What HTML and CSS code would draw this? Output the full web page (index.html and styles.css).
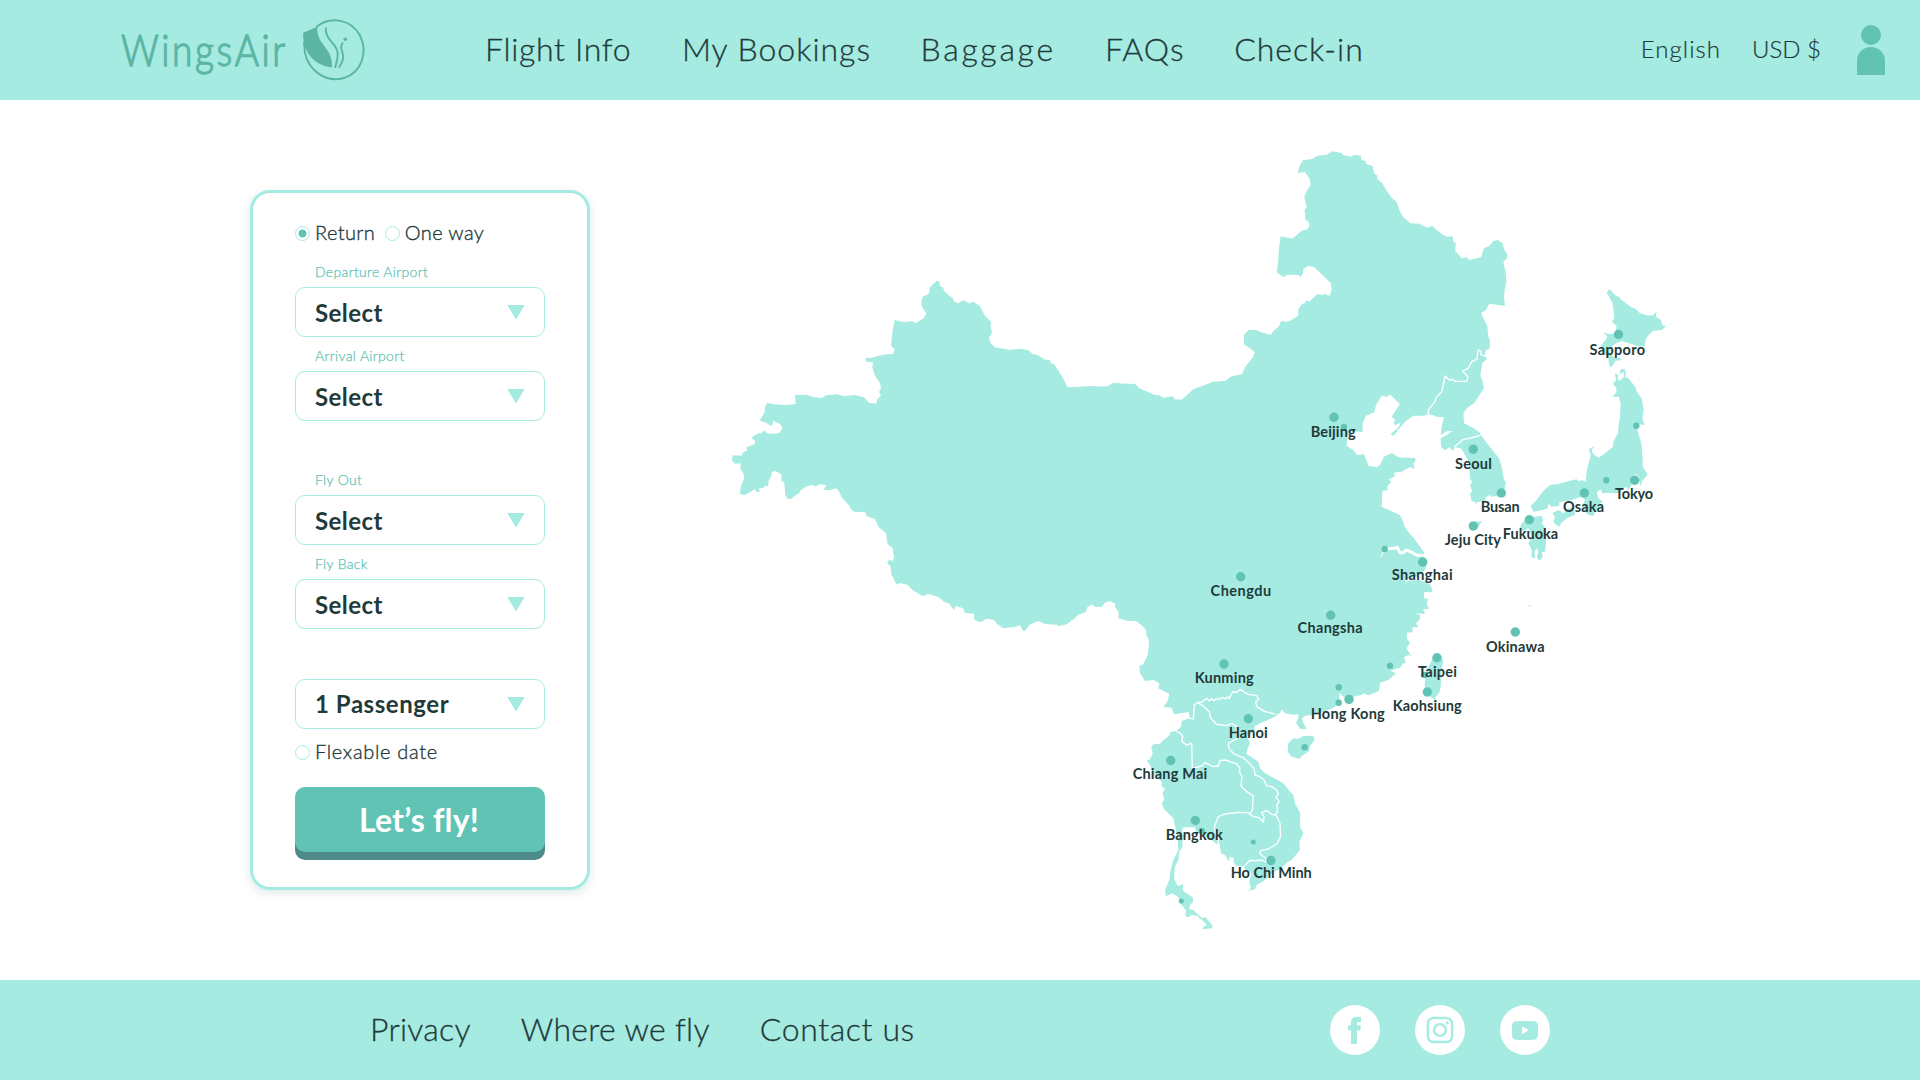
FILE: index.html
```html
<!DOCTYPE html>
<html lang="en">
<head>
<meta charset="utf-8">
<title>WingsAir</title>
<link rel="stylesheet" href="styles.css">
</head>
<body>
<header class="header">
  <a class="logo">
    <svg width="250" height="100" viewBox="120 0 250 100">
      <text class="wordmark" x="121" y="65.500" textLength="167" lengthAdjust="spacingAndGlyphs">WingsAir</text>
      <g fill="none" stroke="#5cb5a3" stroke-width="1.9" stroke-linecap="round">
        <path d="M317 26.500C331 16 351 19 360 35.500C369 54 360 73 344 78C326 83 309 71 305 53L304 43"/>
        <path d="M325.800 28.300C325 42 340 43 337.500 58Q336.500 63 335.200 67"/>
        <path d="M342.600 43.300C338 49 345 52 343 59Q342 63 339.200 67"/>
      </g>
      <path fill="#5cb5a3" d="M303.200 32.700L317.400 26.700C316 45 333 47 332 67.300C315 66 302 52 303.200 32.700Z"/>
      <circle cx="345.300" cy="39.300" r="1.800" fill="#5cb5a3"/>
    </svg>
  </a>
  <nav class="nav">
    <a class="n1">Flight Info</a><a class="n2">My Bookings</a><a class="n3">Baggage</a><a class="n4">FAQs</a><a class="n5">Check-in</a>
  </nav>
  <div class="account">
    <span class="lang">English</span><span class="cur">USD $</span>
    <svg width="28" height="50" viewBox="0 0 28 50" fill="#60c3b4"><circle cx="14" cy="10" r="10"/><path d="M0 50V36a14 14 0 0 1 28 0V50Z"/></svg>
  </div>
</header>

<main class="main">
  <form class="card">
    <div class="radios">
      <span class="radio on"></span><span class="r1">Return</span>
      <span class="radio second"></span><span class="r2">One way</span>
    </div>
    <div class="field"><label>Departure Airport</label><div class="select"><span>Select</span><i></i></div></div>
    <div class="field"><label>Arrival Airport</label><div class="select"><span>Select</span><i></i></div></div>
    <div class="field gap"><label>Fly Out</label><div class="select"><span>Select</span><i></i></div></div>
    <div class="field"><label>Fly Back</label><div class="select"><span>Select</span><i></i></div></div>
    <div class="select passengers"><span>1 Passenger</span><i></i></div>
    <div class="radios flex"><span class="radio"></span><span class="r3">Flexable date</span></div>
    <div class="submit">Let’s fly!</div>
  </form>

  <svg class="map" viewBox="720 140 960 800">
    <g class="land">
      <!-- western China -->
      <path transform="translate(720 270) scale(.33333)" d="M1200 340L1180 340 1163 349 1110 350 1042 351 1028 322 1010 295 1003 283 993 280 990 270 975 269 952 255 938 252 925 241 900 236 870 240 825 232 812 220 807 203 816 188 812 172 813 155 795 138 780 108 760 95 747 100 730 90 715 100 703 95 698 85 675 66 668 52 660 48 658 34 650 32 628 53 629 65 624 73 608 80 604 95 606 110 619 130 612 143 590 158 582 158 579 153 560 156 545 155 524 150 518 180 513 228 524 236 519 252 500 253 470 259 455 264 440 263 435 270 440 275 459 277 457 292 465 317 480 340 483 355 477 367 483 375 471 390 469 401 447 398 432 382 405 375 385 377 370 378 350 373 318 376 305 384 285 382 258 374 225 375 227 402 200 405 160 403 142 398 135 410 133 428 119 452 140 459 150 467 157 465 160 452 180 462 188 475 177 490 143 491 133 481 125 490 112 491 94 503 106 513 104 523 80 532 81 541 68 548 65 557 38 556 35 570 44 581 62 580 61 597 68 605 73 623 62 650 60 672 75 675 90 667 103 658 110 665 119 666 117 655 128 654 135 647 144 648 146 632 153 620 156 605 167 603 185 614 184 632 193 637 196 675 203 687 215 686 222 679 238 670 242 661 258 650 278 644 283 650 300 643 318 645 312 660 328 661 347 655 355 661 365 682 388 707 392 717 402 725 435 726 440 738 465 748 475 770 498 790 502 818 508 829 517 832 523 865 516 873 508 869 501 878 512 890 514 912 525 936 532 944 540 939 562 944 580 962 608 978 625 972 655 981 672 995 688 1001 702 1020 707 1008 728 1014 735 1029 762 1031 763 1050 782 1057 800 1046 822 1050 832 1063 850 1075 882 1071 900 1066 910 1084 918 1080 928 1064 955 1053 975 1062 1010 1064 1015 1069 1040 1063 1065 1044 1075 1034 1098 1026 1102 1012 1117 1002 1125 1010 1145 1010 1155 997 1170 993 1185 1000 1186 1012 1196 1025 1196 1045 1210 1045 1210 360Z"/>
      <!-- north-eastern China -->
      <path transform="translate(1080 130) scale(.33333)" d="M0 770L35 768 60 771 82 770 98 760 165 762 178 775 225 795 238 796 250 803 279 799 283 808 305 809 340 778 400 755 437 752 455 739 485 733 497 709 520 680 525 666 492 643 492 615 505 600 528 599 542 606 572 615 577 606 597 589 604 573 625 575 654 558 656 535 667 521 675 520 679 511 687 515 713 492 727 495 735 492 749 497 755 480 753 460 703 412 686 408 670 417 669 430 662 441 655 435 622 434 610 441 590 427 594 400 597 355 602 319 637 326 665 302 683 298 689 285 684 274 676 270 674 240 680 232 676 215 673 200 680 183 692 165 688 145 674 125 654 130 657 112 668 91 697 87 712 77 740 74 757 64 785 69 790 76 815 80 822 74 842 77 845 90 857 93 859 102 878 108 882 130 892 137 892 148 907 160 920 182 935 203 950 216 958 240 970 262 992 280 1018 281 1042 293 1057 287 1070 300 1090 315 1103 321 1118 318 1119 333 1127 340 1126 363 1145 385 1160 382 1168 390 1203 382 1212 354 1228 348 1240 333 1252 330 1268 340 1272 358 1282 372 1281 384 1270 395 1277 425 1279 455 1274 480 1272 500 1275 528 1228 521 1218 539 1203 550 1222 588 1225 620 1230 632 1229 657 1218 660 1214 676 1180 740 1100 800 1045 855 1025 857 1000 857 975 875 960 893 940 918 932 912 955 893 962 878 945 885 940 880 946 870 935 860 960 822 945 808 930 793 922 800 905 797 888 825 883 847 857 858 848 880 848 905 820 905 803 915 800 948 820 960 832 975 852 973 866 1008 890 1012 900 1005 912 980 936 969 955 982 1005 984 1007 993 1000 1000 1005 1017 990 1011 965 1025 942 1028 945 1038 925 1050 928 1060 915 1080 880 1100 0 1100Z"/>
      <!-- southern China -->
      <path transform="translate(1080 540) scale(.33333)" d="M0 215L20 195 36 193 45 200 65 200 75 187 90 183 105 190 106 202 120 215 116 235 145 243 168 243 185 256 198 270 199 285 207 300 206 322 203 345 190 372 178 378 180 400 195 423 220 420 238 430 235 445 268 462 262 485 250 500 275 503 282 523 325 516 340 540 500 560 535 550 570 535 585 522 600 520 605 508 615 520 640 524 655 522 655 535 648 548 660 566 680 568 670 548 666 535 675 527 700 525 730 515 760 503 779 490 778 458 788 468 800 478 830 468 845 465 850 460 865 466 885 458 897 452 900 428 925 420 948 400 930 392 960 383 970 370 978 370 972 352 985 345 993 348 980 325 990 308 982 298 980 278 998 277 997 262 1015 262 1008 250 1018 240 1022 226 1005 220 1035 222 1030 208 1047 206 1040 190 1045 178 1032 174 1033 156 1058 157 1052 135 1020 120 980 122 978 132 976 118 1010 110 1035 90 1042 66 1030 48 1033 38 1002 -5 988 -20 973 -42 970 -55 960 -75 905 -100 907 -148 925 -150 920 -160 935 -176 880 -200 0 -200Z"/>
      <!-- Indochina -->
      <path transform="translate(1110 660) scale(.33333)" d="M250 60L238 160 238 175 215 183 213 200 198 213 180 217 178 227 158 242 150 252 130 253 124 262 128 280 120 298 110 302 122 318 128 340 155 365 155 380 165 385 158 400 163 420 155 430 162 447 190 475 196 500 203 540 205 570 190 600 182 630 178 660 165 690 168 708 188 700 205 712 212 732 228 750 226 768 236 772 245 764 262 768 282 785 290 795 278 802 278 808 305 805 308 797 285 770 278 775 265 765 250 750 238 748 240 735 250 725 248 712 225 697 218 690 220 672 203 678 192 655 195 620 205 600 208 575 218 560 217 545 222 530 215 515 220 502 255 502 258 515 275 515 285 530 300 535 320 553 328 550 333 580 345 585 355 604 360 590 372 595 370 605 378 617 400 617 408 632 425 640 418 665 423 685 415 693 435 688 440 675 465 660 490 635 510 628 530 608 545 600 570 570 568 545 580 520 570 500 571 460 555 430 550 405 540 395 520 370 465 340 450 325 445 305 415 285 409 282 413 265 420 250 412 230 435 210 433 200 450 190 495 170 515 150 500 60Z"/>
      <path transform="translate(1110 660) scale(.33333)" d="M535 250L550 235 565 236 580 228 610 227 614 240 600 258 598 272 575 288 570 296 545 290 533 275Z"/>
      <!-- Taiwan -->
      <path transform="translate(1080 540) scale(.33333)" d="M1060 350L1090 358 1084 395 1082 440 1078 458 1066 472 1065 485 1060 475 1035 462 1034 430 1040 390 1052 368Z"/>
      <g transform="translate(1320 330) scale(.33333)">
        <!-- Korea -->
        <path d="M475 58L488 62 494 76 501 87 487 100 481 137 487 150 492 175 480 193 462 220 442 233 430 250 432 280 460 294 480 308 487 320 505 345 537 385 545 410 550 440 552 450 557 455 555 475 540 500 524 498 514 500 510 495 497 502 496 512 470 517 468 525 465 516 455 512 450 490 457 485 450 465 457 455 450 448 449 430 447 400 440 385 430 365 422 355 405 352 398 362 388 352 375 361 363 350 362 325 380 315 398 302 380 304 362 316 365 290 372 262 350 260 340 256 330 255 325 245 375 140Z"/>
        <path d="M448 580L465 575 486 574 476 590 455 602Z"/>
        <!-- Honshu -->
        <path d="M885 130L888 150 879 162 890 175 888 188 877 200 896 200 902 220 900 260 895 290 894 310 880 335 879 350 855 370 835 383 818 370 815 360 824 347 806 358 812 375 800 425 797 455 784 450 778 455 770 448 750 452 715 462 690 465 670 482 655 503 645 515 632 528 640 545 670 540 683 535 685 522 695 530 718 528 718 517 755 510 785 500 795 510 785 530 790 540 805 555 820 558 825 545 845 530 838 522 848 515 835 505 830 487 842 478 847 490 870 488 885 490 898 488 905 480 918 470 925 480 935 465 935 440 947 432 956 440 962 470 965 455 983 433 968 410 968 390 965 345 955 310 950 290 960 283 974 286 967 265 971 240 965 205 950 185 947 172 925 145 912 140 900 152 893 148 895 135Z"/>
        <path d="M899 125L905 116 915 118 918 135 913 143 910 126 900 132Z"/>
        <!-- Shikoku, Kyushu -->
        <path d="M697 550L715 540 730 550 745 535 762 533 765 555 740 565 723 580 720 590 708 585 700 575 705 560Z"/>
        <path d="M612 573L640 560 665 558 670 570 665 580 676 595 678 640 675 665 665 667 668 680 660 692 650 684 655 665 650 655 643 665 646 685 635 682 635 660 625 640 635 620 625 595 610 605 600 597 602 585Z"/>
        <path d="M624 829L630 825 636 825 628 830Z"/>
      </g>
      <!-- Hokkaido -->
      <path transform="translate(1560 270) scale(.33333)" d="M148 57L165 75 177 80 185 90 212 110 228 118 240 130 265 137 280 136 290 124 287 140 303 150 307 165 318 168 306 180 280 182 268 193 257 208 254 228 235 230 215 222 185 213 165 222 152 232 150 252 165 264 185 265 182 271 167 272 155 292 148 288 145 265 125 240 122 228 137 210 142 200 130 187 148 193 165 190 170 168 156 155 163 145 158 100 150 85 140 68Z"/>
    </g>

    <g class="borders">
      <g transform="translate(1110 660) scale(.33333)">
        <path d="M230 165L240 175 250 177 253 135 262 127 275 127 290 115 297 122 305 116 312 122 318 116 330 118 337 112 345 117 352 110 357 116 368 96 380 97 392 88 405 98 415 103 440 107 446 118 437 125 440 140 465 155 495 162"/>
        <path d="M262 127L280 138 298 155 302 175 320 193 350 197 365 190 380 200 382 235 355 250 357 265 372 282 400 293 418 310 432 325 435 345 450 350 462 360 470 377 485 380 500 390 505 400 498 412 508 425 500 435 503 455 495 462"/>
        <path d="M198 213L212 220 218 230 216 245 230 255 245 250 247 325 275 318 285 308 310 320 325 318 330 302 345 300 380 312 390 325 388 335 396 350 393 378 410 395 430 408 427 450 420 462"/>
        <path d="M325 553L325 530 317 520 313 500 325 470 345 462 385 457 415 458 430 470 445 472 460 487 462 470 455 458 470 452 485 463 498 465 510 490 512 530 500 552 475 567 452 572 450 582 468 595 468 606 455 600 440 602 420 601 403 618"/>
      </g>
      <g transform="translate(1320 330) scale(.33333)">
        <path d="M325 262L325 240 345 215 347 205 365 185 371 160 375 138 388 150 398 148 405 154 440 154 444 140 427 123 445 115 455 95 470 88 475 60 483 64 482 74 498 79"/>
        <path d="M402 352L430 328 445 326 475 318 487 313"/>
        <path d="M192 657L222 655 232 652 240 668 250 668 258 660 278 668 290 676 315 676" stroke-width="9"/>
        <path d="M190 665L182 681" stroke-width="3"/>
      </g>
    </g>

    <g class="dots">
      <circle cx="1334" cy="417.300" r="4.700"/><circle cx="1473.300" cy="449.300" r="4.700"/><circle cx="1501.300" cy="493" r="4.700"/><circle cx="1473.300" cy="526" r="4.700"/><circle cx="1422.700" cy="562" r="4.700"/><circle cx="1330.700" cy="615.300" r="4.700"/><circle cx="1515.300" cy="632" r="4.700"/><circle cx="1437" cy="657.700" r="4.700"/><circle cx="1529.300" cy="519.700" r="4.700"/><circle cx="1584.300" cy="493" r="4.700"/><circle cx="1634.700" cy="480.300" r="4.700"/><circle cx="1618.500" cy="334.500" r="4.700"/><circle cx="1240.700" cy="576.700" r="4.700"/><circle cx="1224" cy="664" r="4.700"/><circle cx="1349" cy="699.500" r="4.700"/><circle cx="1248.300" cy="718.700" r="4.700"/><circle cx="1427.300" cy="692" r="4.700"/><circle cx="1170.700" cy="760.500" r="4.700"/><circle cx="1195.300" cy="820.500" r="4.700"/><circle cx="1271" cy="860.500" r="4.700"/>
      <circle cx="1344" cy="427" r="3.200"/><circle cx="1384.700" cy="549" r="3.200"/><circle cx="1390" cy="665.700" r="3.200"/><circle cx="1606.300" cy="480.300" r="3.200"/><circle cx="1636.300" cy="425.700" r="3.200"/><circle cx="1338.700" cy="687.300" r="3.200"/><circle cx="1338.700" cy="702.700" r="3.200"/><circle cx="1424.700" cy="675" r="3.200"/><circle cx="1304.700" cy="747.300" r="3.200"/><circle cx="1201.700" cy="831" r="3.200"/><circle cx="1253.300" cy="842" r="2.500"/><circle cx="1181.300" cy="901" r="2.500"/>
    </g>

    <g class="cities">
      <text x="1310.700" y="436.600" textLength="45">Beijing</text>
      <text x="1454.900" y="468.500" textLength="37">Seoul</text>
      <text x="1589.600" y="354.500" textLength="55.500">Sapporo</text>
      <text x="1480.700" y="512.300" textLength="39">Busan</text>
      <text x="1563" y="512.300" textLength="41">Osaka</text>
      <text x="1615" y="499.300" textLength="38">Tokyo</text>
      <text x="1444.800" y="544.500" textLength="56">Jeju City</text>
      <text x="1502.700" y="538.500" textLength="55.500">Fukuoka</text>
      <text x="1391.700" y="580.300" textLength="61">Shanghai</text>
      <text x="1486" y="651.500" textLength="58.500">Okinawa</text>
      <text x="1210.600" y="596.300" textLength="60.500">Chengdu</text>
      <text x="1297.600" y="633.300" textLength="65">Changsha</text>
      <text x="1194.700" y="683.300" textLength="59">Kunming</text>
      <text x="1418" y="676.600" textLength="39">Taipei</text>
      <text x="1392.700" y="711.400" textLength="69">Kaohsiung</text>
      <text x="1310.700" y="719.400" textLength="74">Hong Kong</text>
      <text x="1228.700" y="737.500" textLength="39">Hanoi</text>
      <text x="1132.700" y="779.400" textLength="74.500">Chiang Mai</text>
      <text x="1165.700" y="839.500" textLength="57">Bangkok</text>
      <text x="1230.700" y="878.300" textLength="81">Ho Chi Minh</text>
    </g>
  </svg>
</main>

<footer class="footer">
  <nav class="nav">
    <a class="f1">Privacy</a><a class="f2">Where we fly</a><a class="f3">Contact us</a>
  </nav>
  <div class="social">
    <svg width="50" height="50" viewBox="0 0 50 50"><circle cx="25" cy="25" r="25" fill="#fff"/><path fill="#a5ebe1" d="M21 39V25.300H18V20.300H21V18C21 13.500 23 12 27 12H31V17H28.300Q27 17 27 18.300V20.300H31L30.300 25.300H27V39Z"/></svg>
    <svg width="50" height="50" viewBox="0 0 50 50"><circle cx="25" cy="25" r="25" fill="#fff"/><g fill="none" stroke="#a5ebe1" stroke-width="2.400"><rect x="12.900" y="13" width="24.200" height="24" rx="5.500"/><circle cx="25" cy="25" r="5.900"/></g><circle cx="32.200" cy="17.800" r="1.600" fill="#a5ebe1"/></svg>
    <svg width="50" height="50" viewBox="0 0 50 50"><circle cx="25" cy="25" r="25" fill="#fff"/><path fill="#a5ebe1" d="M16 16.300Q25 15.500 34 16.300Q37.700 16.500 38 21Q38.300 25.500 38 30Q37.700 34.500 34 34.700Q25 35.500 16 34.700Q12.300 34.500 12 30Q11.700 25.500 12 21Q12.300 16.500 16 16.300Z"/><path fill="#fff" d="M22 21.300L29 25.200 22 29.200Z"/></svg>
  </div>
</footer>
</body>
</html>
```
FILE: styles.css
```css
* { box-sizing: border-box; }
body {
  margin: 0;
  width: 1920px;
  height: 1080px;
  overflow: hidden;
  background: #fff;
  color: #1f3a3a;
  font-family: Lato, "Noto Sans", sans-serif;
  font-variant-ligatures: none;
  display: flex;
  flex-direction: column;
}
.header, .footer {
  height: 100px;
  flex: none;
  background: #a5ebe1;
  display: flex;
  align-items: center;
}
.header { padding: 0 35px 0 120px; }
.logo { display: block; height: 100px; width: 365px; }
.wordmark {
  font-size: 43px;
  font-weight: 300;
  letter-spacing: 3px;
  fill: #5cb5a3;
  stroke: #5cb5a3;
  stroke-width: 1.3;
  stroke-linejoin: round;
}
.nav {
  display: flex;
  gap: 50px;
  padding-bottom: 3px;
  font-size: 32px;
  font-weight: 300;
  line-height: 40px;
  white-space: nowrap;
  -webkit-text-stroke: .3px #1f3a3a;
}
.n1 { letter-spacing: .67px; margin-right: .6px; }
.n2 { letter-spacing: 1px; margin-right: -.5px; }
.n3 { letter-spacing: 2.7px; margin-right: -.9px; }
.n4 { letter-spacing: 1.1px; margin-right: -.5px; }
.n5 { letter-spacing: .95px; }
.f1 { letter-spacing: .25px; }
.f2 { letter-spacing: .3px; }
.f3 { letter-spacing: .6px; }
.account {
  margin-left: auto;
  display: flex;
  align-items: center;
  font-size: 24px;
  font-weight: 300;
  line-height: 30px;
  white-space: nowrap;
}
.account span { padding-bottom: 2px; -webkit-text-stroke: .2px #1f3a3a; }
.lang { margin-right: 31px; letter-spacing: 1.05px; }
.cur { margin-right: 36px; }

.main { flex: 1; display: flex; align-items: flex-start; padding: 40px 0 0 250px; }
.card {
  width: 340px;
  height: 700px;
  margin-top: 50px;
  border: 3px solid #a5ebe1;
  border-radius: 20px;
  padding: 27px 42px 0;
  box-shadow: 0 3px 10px rgba(78, 138, 138, .2);
}
.radios {
  display: flex;
  align-items: center;
  height: 26px;
  font-size: 20px;
  font-weight: 300;
  line-height: 26px;
  white-space: nowrap;
  -webkit-text-stroke: .35px #1f3a3a;
}
.radios span:not(.radio) { padding-bottom: 2px; }
.r1, .r2 { letter-spacing: .4px; }
.r3 { letter-spacing: .68px; }
.radio { width: 15px; height: 15px; border: 1px solid #a5ebe1; border-radius: 50%; margin-right: 5px; flex: none; }
.radio.on { background: radial-gradient(circle, #60c3b4 0 3.700px, transparent 4.300px); }
.radio.second { margin-left: 9.500px; }
.field { margin-bottom: 5px; }
.field.gap { margin-top: 45px; }
.field label {
  display: block;
  height: 29px;
  padding: 3px 0 0 20px;
  font-size: 14px;
  line-height: 22px;
  color: #60c3b4;
  font-weight: 300;
  letter-spacing: .33px;
  -webkit-text-stroke: .25px #60c3b4;
}
.radios + .field { margin-top: 12px; }
.select {
  height: 50px;
  border: 1px solid #a5ebe1;
  border-radius: 10px;
  padding: 0 19px 0 19px;
  display: flex;
  align-items: center;
  justify-content: space-between;
  font-size: 24px;
  font-weight: 700;
  letter-spacing: .45px;
}
.passengers span { padding-bottom: 1px; letter-spacing: .55px; }
.select i { width: 18px; height: 15px; background: #a5ebe1; clip-path: polygon(0 0, 100% 0, 50% 100%); }
.passengers { margin-top: 50px; }
.radios.flex { margin-top: 10px; }
.submit {
  height: 65px;
  margin-top: 22px;
  border-radius: 10px;
  background: #60c3b4;
  box-shadow: 0 8px 0 #4e8a8a;
  color: #fff;
  font-size: 32px;
  font-weight: 700;
  letter-spacing: .2px;
  line-height: 65px;
  text-align: center;
  padding-right: 2px;
}

.map { width: 960px; height: 800px; margin-left: 130px; flex: none; }
.land { fill: #a5ebe1; }
.borders { fill: none; stroke: #fff; stroke-width: 4; stroke-linejoin: round; }
.dots { fill: #60c3b4; }
.cities { font-size: 14.5px; font-weight: 700; fill: #1f3a3a; }

.footer { padding-left: 370px; }
.social { display: flex; gap: 35px; margin-left: auto; margin-right: 370px; }
```
